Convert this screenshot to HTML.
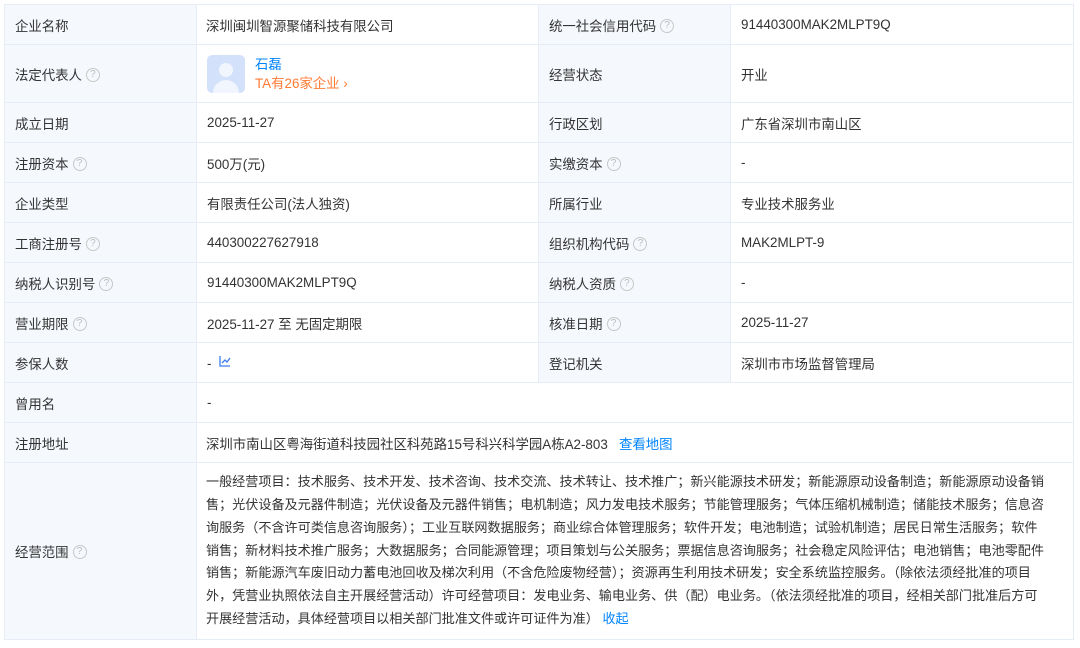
<!DOCTYPE html>
<html><head><meta charset="utf-8"><style>
*{margin:0;padding:0;box-sizing:border-box}
body{width:1080px;height:648px;background:#fff;font-family:"Liberation Sans","Noto Sans CJK SC",sans-serif;font-size:13.4px;color:#333;position:relative;overflow:hidden}
table{position:absolute;left:4px;top:4px;width:1069px;border-collapse:collapse;table-layout:fixed}
td{border:1px solid #e6edf7;padding:0 10px;vertical-align:middle;height:40px}
td.l{background:#f5f8fd;color:#333}
.q{display:inline-block;width:14px;height:14px;border:1px solid #c8c8c8;border-radius:50%;color:#bbb;font-size:10px;line-height:12px;text-align:center;margin-left:4px;vertical-align:middle;position:relative;top:-1px}
a{color:#0084ff;text-decoration:none}
.scope{line-height:22.8px;padding:6px 10px 6px 9px;white-space:nowrap;font-size:13.1px}
</style></head><body>
<table>
<colgroup><col style="width:192px"><col style="width:342px"><col style="width:192px"><col style="width:343px"></colgroup>
<tr><td class="l">企业名称</td><td style="padding-left:9px">深圳闽圳智源聚储科技有限公司</td><td class="l">统一社会信用代码<span class="q">?</span></td><td>91440300MAK2MLPT9Q</td></tr>
<tr><td class="l" style="height:58px">法定代表人<span class="q">?</span></td><td><div style="display:flex;align-items:center"><div style="width:38px;height:38px;border-radius:5px;background:#d3e1fa;position:relative;overflow:hidden;margin-right:10px"><div style="position:absolute;left:12px;top:8px;width:14px;height:14px;border-radius:50%;background:#f1f5fd"></div><div style="position:absolute;left:6px;top:25px;width:26px;height:20px;border-radius:13px 13px 0 0;background:#f1f5fd"></div></div><div><div style="color:#0084ff;line-height:19px">石磊</div><div style="color:#ff7a33;line-height:19px">TA有26家企业 ›</div></div></div></td><td class="l">经营状态</td><td>开业</td></tr>
<tr><td class="l">成立日期</td><td>2025-11-27</td><td class="l">行政区划</td><td>广东省深圳市南山区</td></tr>
<tr><td class="l">注册资本<span class="q">?</span></td><td>500万(元)</td><td class="l">实缴资本<span class="q">?</span></td><td>-</td></tr>
<tr><td class="l">企业类型</td><td>有限责任公司(法人独资)</td><td class="l">所属行业</td><td>专业技术服务业</td></tr>
<tr><td class="l">工商注册号<span class="q">?</span></td><td>440300227627918</td><td class="l">组织机构代码<span class="q">?</span></td><td>MAK2MLPT-9</td></tr>
<tr><td class="l">纳税人识别号<span class="q">?</span></td><td>91440300MAK2MLPT9Q</td><td class="l">纳税人资质<span class="q">?</span></td><td>-</td></tr>
<tr><td class="l">营业期限<span class="q">?</span></td><td>2025-11-27 至 无固定期限</td><td class="l">核准日期<span class="q">?</span></td><td>2025-11-27</td></tr>
<tr><td class="l">参保人数</td><td>- &nbsp;<svg width="12" height="12" viewBox="0 0 12 12" style="vertical-align:1px"><path d="M1 1V11H11M3 8L6 5L8 7L11 3" fill="none" stroke="#3d7cf0" stroke-width="1.3"/></svg></td><td class="l">登记机关</td><td>深圳市市场监督管理局</td></tr>
<tr><td class="l">曾用名</td><td colspan="3">-</td></tr>
<tr><td class="l">注册地址</td><td colspan="3" style="padding-left:9px">深圳市南山区粤海街道科技园社区科苑路15号科兴科学园A栋A2-803 &nbsp;&nbsp;<a>查看地图</a></td></tr>
<tr><td class="l" style="height:177px">经营范围<span class="q">?</span></td><td colspan="3" class="scope">一般经营项目：技术服务、技术开发、技术咨询、技术交流、技术转让、技术推广；新兴能源技术研发；新能源原动设备制造；新能源原动设备销<br>售；光伏设备及元器件制造；光伏设备及元器件销售；电机制造；风力发电技术服务；节能管理服务；气体压缩机械制造；储能技术服务；信息咨<br>询服务（不含许可类信息咨询服务）；工业互联网数据服务；商业综合体管理服务；软件开发；电池制造；试验机制造；居民日常生活服务；软件<br>销售；新材料技术推广服务；大数据服务；合同能源管理；项目策划与公关服务；票据信息咨询服务；社会稳定风险评估；电池销售；电池零配件<br>销售；新能源汽车废旧动力蓄电池回收及梯次利用（不含危险废物经营）；资源再生利用技术研发；安全系统监控服务。（除依法须经批准的项目<br>外，凭营业执照依法自主开展经营活动）许可经营项目：发电业务、输电业务、供（配）电业务。（依法须经批准的项目，经相关部门批准后方可<br>开展经营活动，具体经营项目以相关部门批准文件或许可证件为准） <a>收起</a></td></tr>
</table>
</body></html>
